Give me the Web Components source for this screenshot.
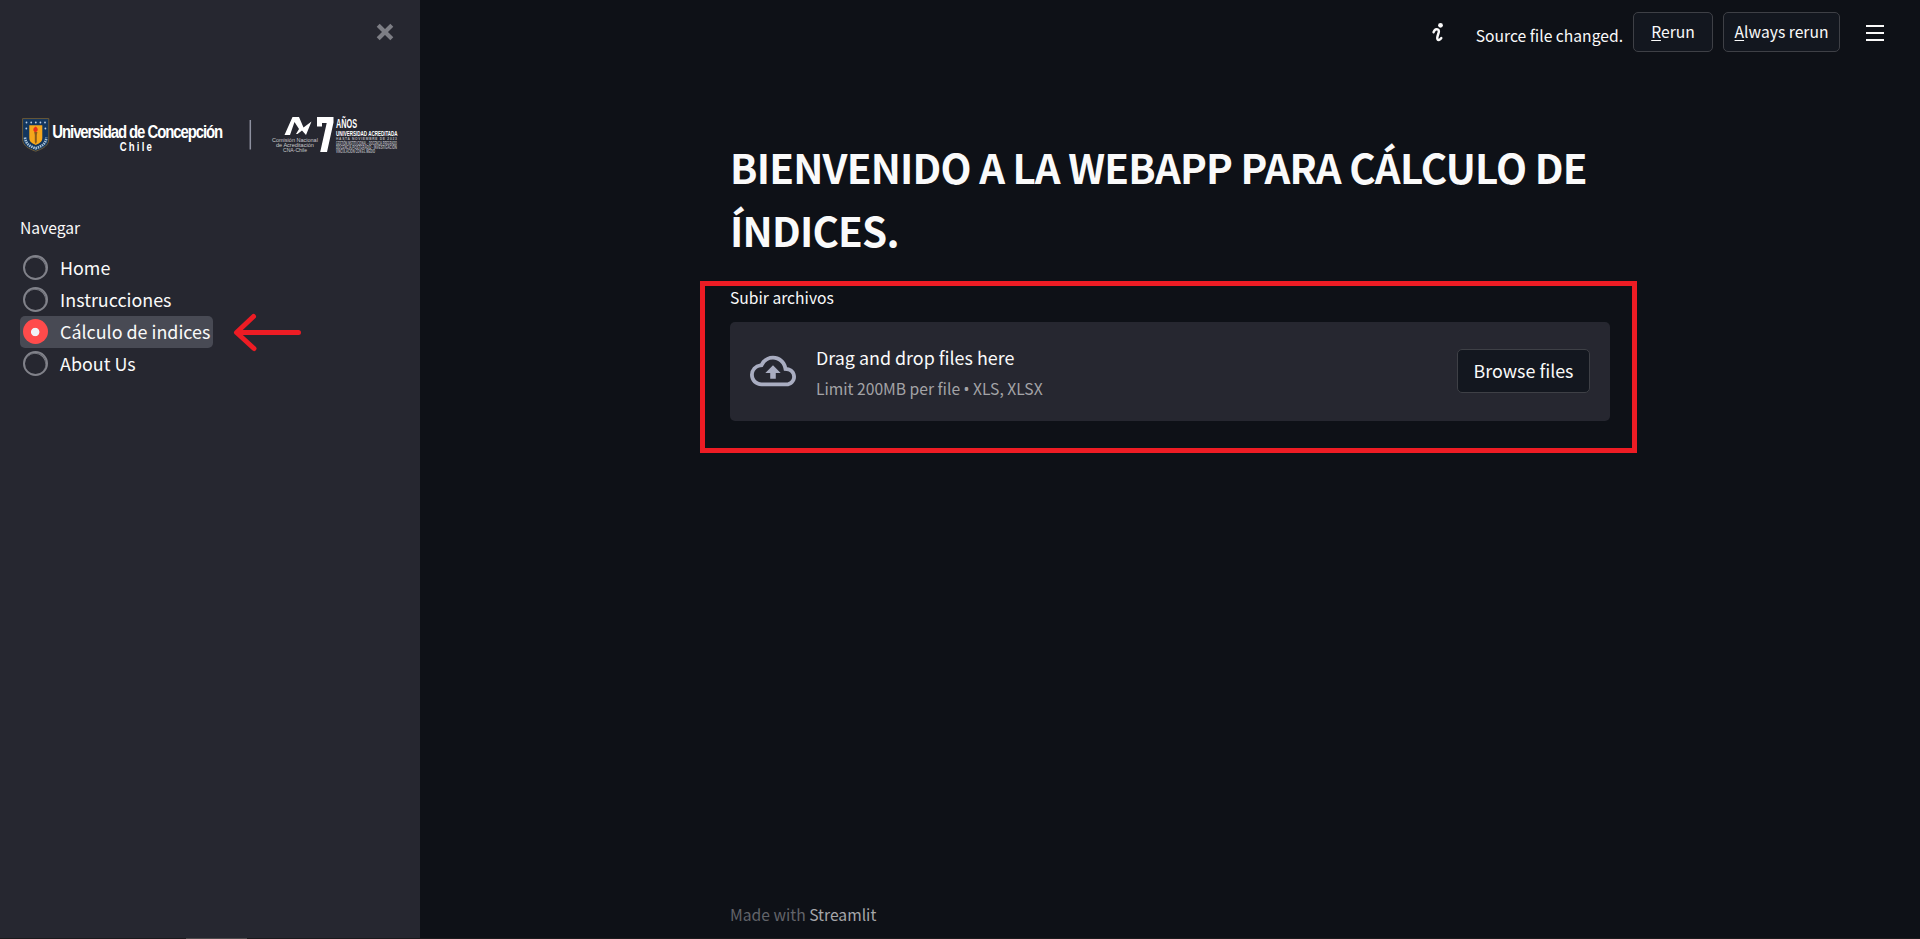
<!DOCTYPE html>
<html lang="es">
<head>
<meta charset="utf-8">
<title>Cálculo de índices</title>
<style>
html,body{margin:0;height:100%;background:#0e1117}
body{overflow:hidden;color:#fafafa;font-family:"Noto Sans CJK SC","Noto Sans",sans-serif;font-size:17.9px;line-height:26px;font-weight:400}
</style>
</head>
<body>
<web-app></web-app>
<script>
function define(name, html){
  const t = document.createElement('template');
  t.innerHTML = html;
  customElements.define(name, class extends HTMLElement{
    connectedCallback(){
      if(this.shadowRoot) return;
      this.attachShadow({mode:'open'}).append(t.content.cloneNode(true));
    }
  });
}

define('small-label', `<style>
:host{display:block;font-size:15.67px;line-height:23px;white-space:nowrap}
</style><slot></slot>`);

define('app-button', `<style>
:host{display:block;box-sizing:border-box;flex:none;border:1px solid #3e4046;border-radius:5px;background:#13171f;text-align:center;white-space:nowrap;padding-top:7px;height:44px}
:host([small]){font-size:15.67px;line-height:23px;height:40px}
</style><slot></slot>`);

define('radio-option', `<style>
:host{display:flex;box-sizing:border-box;width:max-content;height:32px;padding:3px 3px 0 3px;border-radius:5px;gap:12px;white-space:nowrap}
:host([checked]){background:#484a54}
i{box-sizing:border-box;flex:none;width:25px;height:25px;border-radius:50%;background:#262730;border:2px solid #81828a;box-shadow:inset -.5px .8px 0 0 #81828a}
:host([checked]) i{border:0;box-shadow:none;background:radial-gradient(circle at 12.200px 13px,#f0f2f6 3.800px,#ff4b4b 4.600px)}
span{margin-top:-1px}
</style><i></i><span><slot></slot></span>`);

define('university-logo', `<style>
:host{display:block;width:380px;height:50px}
svg{display:block;overflow:visible}
text{fill:#fff;font-family:"Liberation Sans",sans-serif;font-weight:700}
.t{fill:#c9cacd;font-weight:400}
.b{font-weight:700;fill:#b4b5ba}
</style>
<svg width="380" height="50" viewBox="20 110 380 50">
<path d="M22.6 118.6h26.2v20.4c0 6.4-5.600 9.700-13.100 12.200-7.500-2.500-13.100-5.800-13.100-12.200z" fill="#12365f" stroke="#6d5a35" stroke-width="1"/>
<path d="M29.300 125.300h13v12.500c0 4.200-2.700 5.400-6.500 7.200-3.800-1.800-6.500-3-6.500-7.200z" fill="#f6a71b"/>
<path d="M34.200 132h3.200l-.6 3v7l-1 2-1-2v-7z" fill="#8a5a1c"/>
<path d="M33.400 130.500c-.5-2.500 1-3 2.200-4 1.500 1 2.600 2.200 2 4l-1.500 1.400h-1.500z" fill="#e8301f"/>
<g fill="#b9cbe0"><circle cx="26.500" cy="122.500" r=".9"/><circle cx="31.200" cy="122.500" r=".9"/><circle cx="35.800" cy="122.500" r=".9"/><circle cx="40.400" cy="122.500" r=".9"/><circle cx="45" cy="122.500" r=".9"/><circle cx="26.300" cy="128.500" r=".9"/><circle cx="45.400" cy="128.500" r=".9"/></g>
<path d="M25 137.500c.8 7 5 8.800 10.700 10.800 5.700-2 9.900-3.800 10.700-10.800" fill="none" stroke="#a9c2d6" stroke-width="2.600" stroke-dasharray="1.500 .8"/>
<text transform="translate(52.300 137.700) scale(.84 1)" font-size="17.800" textLength="203.500" lengthAdjust="spacing">Universidad de Concepción</text>
<text transform="translate(119.800 150.500) scale(.78 1)" font-size="12.300" textLength="41" lengthAdjust="spacing">Chile</text>
<path d="M250.300 120v29.500" stroke="#8d909f" stroke-width="1.500"/>
<path d="M284.500 135l8-18h6.500l4.500 10.500 8-6-5.500 13.500-4-4.500-4.500 3.500h-1.500l3-5-4.500-7-4.500 13z" fill="#fff"/>
<text class="t" transform="translate(272 141.500) scale(.9 1)" font-size="6" textLength="51" lengthAdjust="spacingAndGlyphs">Comisión Nacional</text>
<text class="t" transform="translate(276 147.200) scale(.9 1)" font-size="6" textLength="42" lengthAdjust="spacingAndGlyphs">de Acreditación</text>
<text class="t" x="283" y="152.300" font-size="5" textLength="24" lengthAdjust="spacingAndGlyphs">CNA-Chile</text>
<path d="M317 117h16.500v5.500l-6.500 29.500h-6.800l6.500-29h-4.700v3.500h-5z" fill="#fff"/>
<text transform="translate(336 128.300) scale(.6 1)" font-size="12" textLength="35" lengthAdjust="spacingAndGlyphs">AÑOS</text>
<text transform="translate(336 135.800) scale(.55 1)" font-size="8" textLength="112" lengthAdjust="spacingAndGlyphs">UNIVERSIDAD ACREDITADA</text>
<text class="t b" transform="translate(336 140.200) scale(.75 1)" font-size="4.400" textLength="81" lengthAdjust="spacing">HASTA NOVIEMBRE DE 2023</text>
<text class="t b" transform="translate(336 144.500) scale(.5 1)" font-size="4.600" textLength="122" lengthAdjust="spacingAndGlyphs">GESTIÓN INSTITUCIONAL · DOCENCIA PREGRADO</text>
<text class="t b" transform="translate(336 148.700) scale(.58 1)" font-size="4.600" textLength="105" lengthAdjust="spacingAndGlyphs">DOCENCIA POSTGRADO · INVESTIGACIÓN</text>
<text class="t b" transform="translate(336 152.700) scale(.55 1)" font-size="4.600" textLength="71" lengthAdjust="spacingAndGlyphs">VINCULACIÓN CON EL MEDIO</text>
</svg>`);

define('side-bar', `<style>
:host{display:flex;flex-direction:column;box-sizing:border-box;width:420px;height:938px;flex:none;background:#262730;padding:22px 20px 0}
.close{align-self:flex-end;display:block;margin-right:5px}
university-logo{margin-top:68px}
small-label{margin-top:56px}
nav{position:relative;margin-top:13px}
.arrow{position:absolute;left:212px;top:60px}
</style>
<svg class="close" width="20" height="20" viewBox="0 0 20 20"><path d="M3.200 3.200l13.600 13.600M16.800 3.200L3.200 16.800" stroke="#7d7e85" stroke-width="4.200"/></svg>
<university-logo></university-logo>
<small-label>Navegar</small-label>
<nav>
<radio-option>Home</radio-option>
<radio-option>Instrucciones</radio-option>
<radio-option checked>Cálculo de indices</radio-option>
<radio-option>About Us</radio-option>
<svg class="arrow" width="72" height="42" viewBox="232 312 72 42"><path d="M298.500 332.500H237M253.500 316.500l-17 16 17.500 16" fill="none" stroke="#ed1c24" stroke-width="5" stroke-linecap="round" stroke-linejoin="round"/></svg>
</nav>`);

define('top-bar', `<style>
:host{display:flex;justify-content:flex-end;align-items:flex-start;height:135px;box-sizing:border-box;padding:12px 36px 0 0}
.info{margin:9px 31px 0 0}
small-label{margin:12px 10px 0 0}
app-button{width:80px;margin-right:10px}
app-button.wide{width:117px;margin-right:26px}
u{text-decoration-thickness:1px;text-underline-offset:2px}
.menu{margin-top:13px}
</style>
<svg class="info" width="14" height="22" viewBox="0 0 14 22"><circle cx="9.500" cy="4.300" r="2.400" fill="#fafafa"/><path d="M2.600 11.200c.8-2.300 2.500-3.300 4-2.800 1.700.6 1.400 2.400.7 4.300-.8 2.200-1.500 4.300-.8 5.500.8 1.200 2.800.8 3.800-1.200" fill="none" stroke="#fafafa" stroke-width="2.500" stroke-linecap="round"/></svg>
<small-label>Source file changed.</small-label>
<app-button small><u>R</u>erun</app-button>
<app-button small class="wide"><u>A</u>lways rerun</app-button>
<svg class="menu" width="18" height="16" viewBox="0 0 18 16"><path d="M0 1h18M0 8h18M0 15h18" stroke="#fafafa" stroke-width="2"/></svg>`);

define('file-uploader', `<style>
:host{display:block;position:relative;padding-top:8px}
.zone{display:flex;box-sizing:border-box;height:99px;margin-top:13px;border-radius:5px;background:#262730;padding:22px 20px 0}
.icon{flex:none;margin:4px 20px 0 0;width:46px;height:46px}
.info{flex:1}
.info small-label{margin-top:7px;color:#a3a3a6}
.dot{font-family:"Noto Sans",sans-serif;line-height:0}
app-button{width:133px;margin-top:5px}
.mark{position:absolute;left:-30px;top:3px;width:937px;height:172px;box-sizing:border-box;border:5px solid #ed1c24}
</style>
<small-label><slot></slot></small-label>
<div class="zone">
<svg class="icon" viewBox="0 0 24 24" fill="#a9adc1"><path d="M19.350 10.040A7.490 7.490 0 0 0 12 4C9.110 4 6.600 5.640 5.350 8.040A5.994 5.994 0 0 0 0 14c0 3.310 2.690 6 6 6h13c2.760 0 5-2.240 5-5 0-2.640-2.050-4.780-4.650-4.960zM19 18H6c-2.210 0-4-1.790-4-4 0-2.050 1.530-3.760 3.560-3.970l1.070-.11.500-.95A5.469 5.469 0 0 1 12 6c2.620 0 4.880 1.860 5.390 4.430l.3 1.500 1.530.11A2.980 2.980 0 0 1 22 15c0 1.650-1.350 3-3 3zM8 13h2.550v3h2.900v-3H16l-4-4z"/></svg>
<div class="info"><div>Drag and drop files here</div><small-label>Limit 200MB per file <span class="dot">•</span> XLS, XLSX</small-label></div>
<app-button>Browse files</app-button>
</div>
<div class="mark"></div>`);

define('page-footer', `<style>
:host{display:block;color:#62646a}
a{color:#a6a7aa}
</style><small-label>Made with <a>Streamlit</a></small-label>`);

define('main-view', `<style>
:host{display:flex;flex-direction:column;flex:1;height:938px}
main{width:880px;margin:0 auto;flex:1;display:flex;flex-direction:column}
h1{margin:0;font-size:40.3px;line-height:63px;font-weight:700;letter-spacing:-.79px}
file-uploader{margin-top:17px}
page-footer{margin-top:auto;padding-bottom:12px}
</style>
<top-bar></top-bar>
<main>
<h1>BIENVENIDO A LA WEBAPP PARA CÁLCULO DE ÍNDICES.</h1>
<file-uploader>Subir archivos</file-uploader>
<page-footer></page-footer>
</main>`);

define('web-app', `<style>
:host{display:flex;flex-wrap:wrap;height:939px;align-content:flex-start}
.edge{width:100%;height:1px;background:#1b1a1c;display:flex}
.edge i{width:61px;margin-left:186px;background:#4c4a4b}
</style><side-bar></side-bar><main-view></main-view><div class="edge"><i></i></div>`);
</script>
</body>
</html>
